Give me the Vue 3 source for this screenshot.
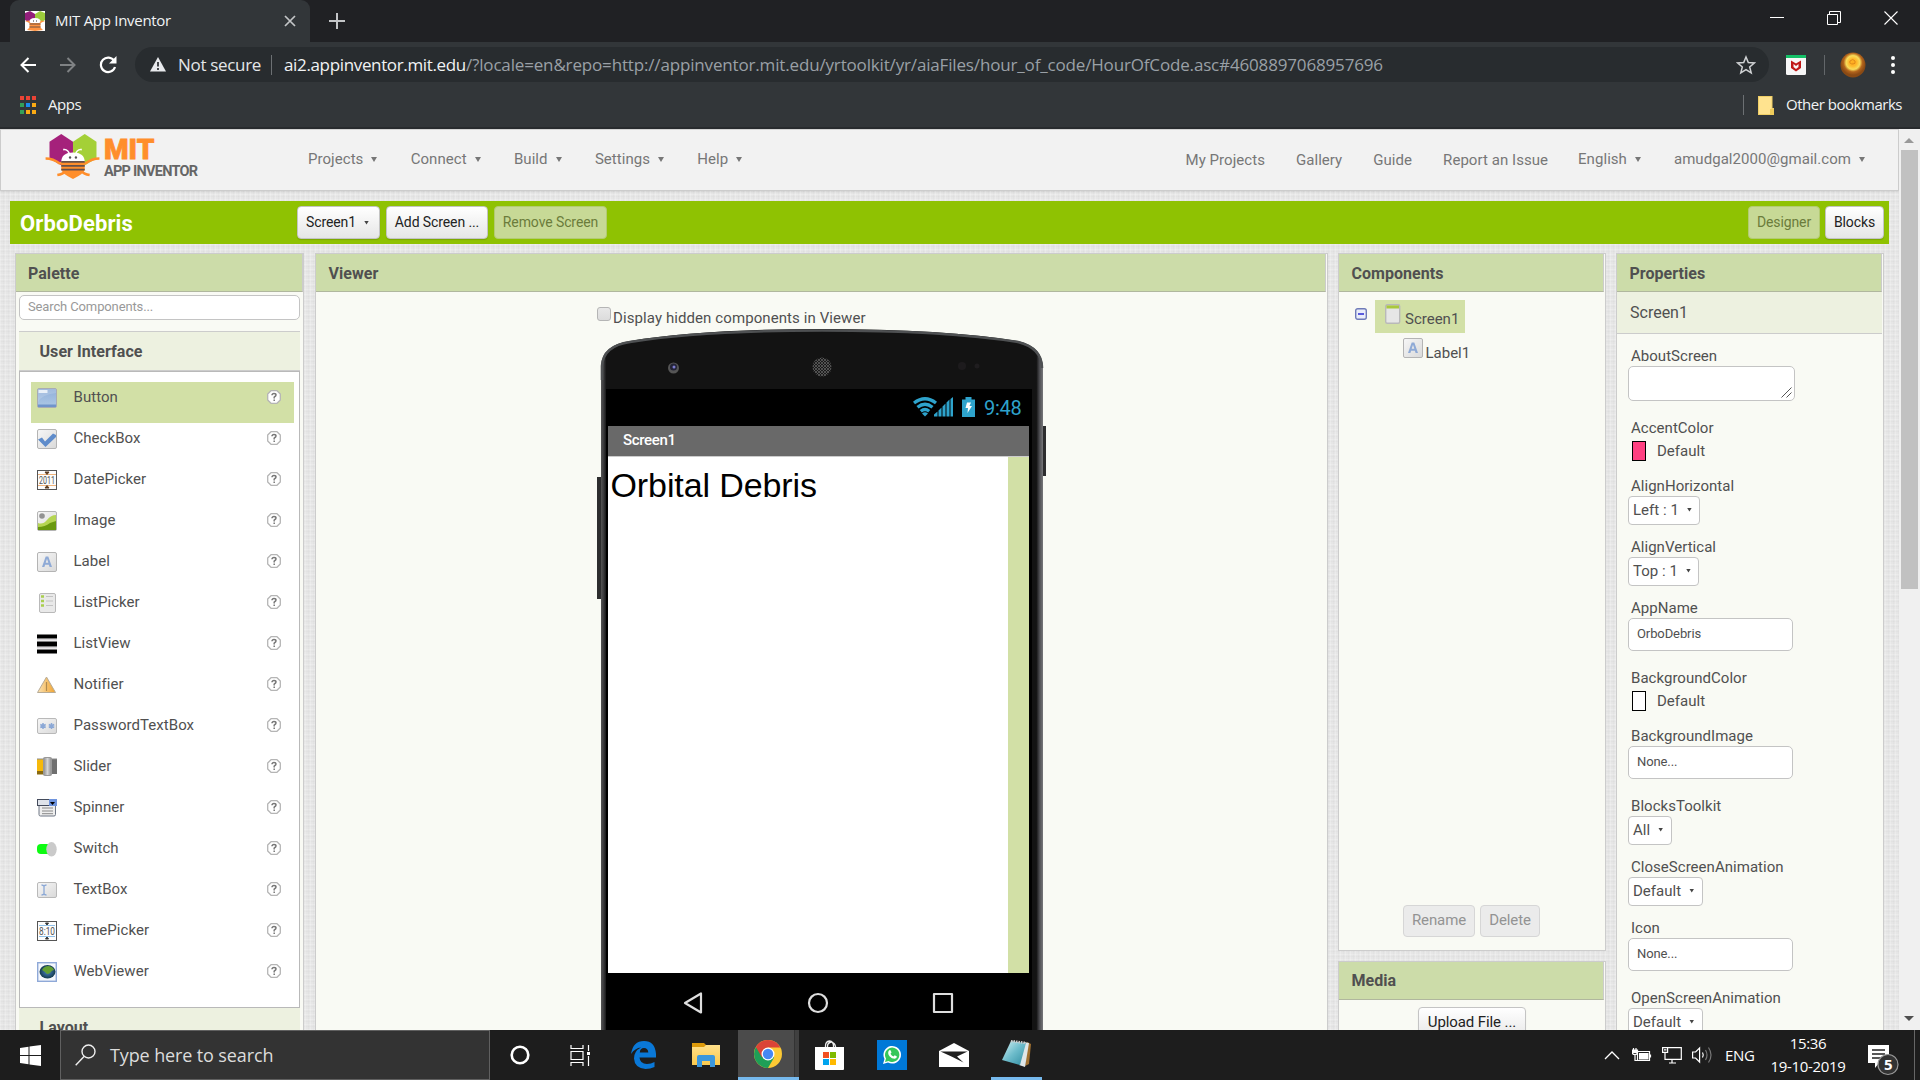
<script setup>
const leftMenu = ['Projects', 'Connect', 'Build', 'Settings', 'Help']
const links = ['My Projects', 'Gallery', 'Guide', 'Report an Issue']
const box = '<rect x=".5" y=".5" width="19" height="19" rx="1.5" fill="url(#gBox)" stroke="#b4b4b4"/>'
const low = '<rect x=".5" y="2.5" width="19" height="15" rx="1.5" fill="url(#gBox)" stroke="#b9b9b9"/>'
const palette = [
  ['Button', '<rect x=".5" y=".5" width="19" height="19" rx="1.5" fill="url(#gBlue)" stroke="#a9acb3"/><path d="M1 16.500h18v2.500H1z" fill="#7094cb"/><path d="M1.500 2h9v3h-9z" fill="#e4edf7"/><path d="M1 14Q4 7 19 5V1H1z" fill="#fff" opacity=".15"/>'],
  ['CheckBox', box + '<path d="M1 10.500l4-2 3 4 8-8 3 1.500v2L8.500 18z" fill="#5f8ccb"/>'],
  ['DatePicker', '<rect x=".5" y=".5" width="19" height="19" fill="#fdfdfd" stroke="#555"/><path d="M1 4.500h18M1 15.500h18" stroke="#f0b47c"/><path d="M8 2h4l-2 2.500zM8 18h4l-2-2.500z" fill="#5b3b20" stroke="#5b3b20"/><text x="10" y="13.700" text-anchor="middle" font-size="10" font-family="Roboto" textLength="16" lengthAdjust="spacingAndGlyphs" fill="#555">2011</text>'],
  ['Image', box + '<circle cx="5" cy="5" r="2.800" fill="#929292"/><path d="M1 12Q6 14 10 9T19 4v8l-18 7z" fill="#b5d553"/><path d="M1 16Q8 16 13 12l6-2v9H1z" fill="#69990f"/>'],
  ['Label', box + '<path d="M5 15L8.700 4.500h2.600L15 15h-2.400l-.7-2.300H8.100L7.400 15zM8.700 10.800h2.600L10 6.700z" fill="#8faad6"/>'],
  ['ListPicker', '<rect x="2.500" y=".5" width="16" height="19" rx="1.500" fill="#e9e9e9" stroke="#b9b9b9"/><path d="M9 3.500h7M9 8h7M9 12.500h7" stroke="#c3c3c3"/><path d="M4 3.500h3M4 8h3M4 12.500h3" stroke="#a9ce4e" stroke-width="2.400"/>'],
  ['ListView', '<path d="M0 .5h20v4H0zM0 7.500h20v5H0zM0 15.500h20v4H0z"/><path d="M0 5h20v1.500H0zM0 13h20v1.500H0z" fill="#d8d5d8"/>'],
  ['Notifier', '<path d="M9.500 2L18.500 17.500H.5z" fill="url(#gOr)" stroke="#b7ab96"/><path d="M9.500 7v9" stroke="#b08a50" stroke-width="1.200"/>'],
  ['PasswordTextBox', low + '<path d="M6 7v6M3.300 8.500l5.400 3M8.700 8.500l-5.400 3M14.500 7v6M11.800 8.500l5.400 3M17.200 8.500l-5.400 3" stroke="#8ba8d6" stroke-width="1.500"/>'],
  ['Slider', '<path d="M0 2h7v15H0z" fill="#f6b90a"/><path d="M0 14h7v3.500H0z" fill="#8a6a10"/><path d="M14 2h6v15h-6z" fill="#6f6f6f"/><path d="M0 2h20" stroke="#8b8b8b"/><rect x="6.500" y=".5" width="8" height="18" rx="1" fill="url(#gKnob)" stroke="#999"/>'],
  ['Spinner', '<rect x="2" y="6" width="16.500" height="12" rx="1.500" fill="#eee" stroke="#6f7785"/><path d="M5 10h11M5 13h11M5 15.700h11" stroke="#888"/><rect x=".5" y="1.500" width="19" height="6" fill="#dfe3ea" stroke="#444b5c"/><path d="M12 1h8v7h-8z" fill="#6f94dd"/><path d="M13 4h5l-2.500 3z" fill="#000"/>'],
  ['Switch', '<rect x="0" y="5" width="17" height="10" rx="4" fill="#0dfb12"/><ellipse cx="14.500" cy="10.300" rx="5.200" ry="7.300" fill="#cacaca"/>'],
  ['TextBox', low + '<path d="M4.500 5q2 0 2.500 1.200Q7.500 5 9.500 5M4.500 15q2 0 2.500-1.200 .5 1.200 2.500 1.200M7 6v8" fill="none" stroke="#8ba8d6" stroke-width="1.300"/>'],
  ['TimePicker', '<rect x=".5" y=".5" width="19" height="19" fill="#fdfdfd" stroke="#555"/><path d="M2 4.500h16M2 15.500h16" stroke="#8fc0e8"/><path d="M8.500 2h3L10 4zM8.500 18h3L10 16z" fill="#333" stroke="#333"/><text x="10" y="13.700" text-anchor="middle" font-size="10" font-family="Roboto" textLength="16" lengthAdjust="spacingAndGlyphs" fill="#555">8:10</text>'],
  ['WebViewer', '<rect x=".7" y=".7" width="18.600" height="18.600" fill="#f4f7fc" stroke="#8fa9d8" stroke-width="1.400"/><ellipse cx="10.500" cy="9.700" rx="8" ry="6.800" fill="url(#gGl)"/><path d="M5 8q2-4 7-4 4 1 5 4-2 0-4 3-3 2-4 0-2-2-4-3z" fill="#63a032"/>'],
]
const props = [
  ['AboutScreen', 'area', ''], ['AccentColor', 'pink', 'Default'], ['AlignHorizontal', 'select', 'Left : 1'], ['AlignVertical', 'select', 'Top : 1'],
  ['AppName', 'input', 'OrboDebris'], ['BackgroundColor', 'white', 'Default'], ['BackgroundImage', 'input', 'None...'], ['BlocksToolkit', 'select', 'All'],
  ['CloseScreenAnimation', 'select', 'Default'], ['Icon', 'input', 'None...'], ['OpenScreenAnimation', 'select', 'Default'],
]
const labelIcon = palette[4][1]
</script>

<template>
  <div class="desktop">
    <svg class="defs" width="0" height="0">
      <defs>
        <linearGradient id="gBox" x2="1" y2="1"><stop stop-color="#f7f7f7" /><stop offset="1" stop-color="#d9d9d9" /></linearGradient>
        <linearGradient id="gBlue" x2="0" y2="1"><stop stop-color="#90afd9" /><stop offset="1" stop-color="#adc8e6" /></linearGradient>
        <linearGradient id="gOr" x2="1"><stop stop-color="#fbe3b4" /><stop offset="1" stop-color="#f0a22e" /></linearGradient>
        <linearGradient id="gKnob" x2="1"><stop stop-color="#8a8a8a" /><stop offset=".5" stop-color="#d5d5d5" /><stop offset="1" stop-color="#8a8a8a" /></linearGradient>
        <radialGradient id="gGl"><stop stop-color="#4d86c8" /><stop offset="1" stop-color="#133a4d" /></radialGradient>
        <radialGradient id="gAv" cy=".4"><stop stop-color="#ffab1e" /><stop offset=".3" stop-color="#ffb82a" /><stop offset=".55" stop-color="#f8dc5a" /><stop offset=".75" stop-color="#b3641c" /><stop offset="1" stop-color="#8a4a14" /></radialGradient>
        <linearGradient id="gFold" x2="0" y2="1"><stop stop-color="#ffe08a" /><stop offset="1" stop-color="#fbc94c" /></linearGradient>
        <linearGradient id="gNote" x2="1" y2="1"><stop stop-color="#d6f2f5" /><stop offset=".5" stop-color="#6dbccb" /><stop offset="1" stop-color="#2f8ca0" /></linearGradient>
        <linearGradient id="gBody" x2="1"><stop stop-color="#555" /><stop offset=".006" stop-color="#3a3a3c" /><stop offset=".012" stop-color="#131313" /><stop offset=".985" stop-color="#131313" /><stop offset=".992" stop-color="#4c4c50" /><stop offset="1" stop-color="#77777a" /></linearGradient>
        <pattern id="mesh" width="3" height="3" patternUnits="userSpaceOnUse"><rect width="3" height="3" fill="#1a1a1a" /><path d="M0 0l3 3M3 0L0 3" stroke="#666" stroke-width=".7" /></pattern>
        <g id="bee">
          <path d="M4 9L16 1l12 8v18L16 33 4 26z" fill="#a5217b" />
          <path d="M28 9L40 1l12 8v17l-12 7-12-7z" fill="#a4d037" />
          <path d="M0 26q8 0 14 5h27q6-5 14-5M12 43q6-1 8-4M45 43q-6-1-8-4" fill="none" stroke="#ff8e2b" stroke-width="2.600" />
          <path d="M18 17q5-1 7 6M37 17q-5-1-7 6" fill="none" stroke="#fff" stroke-width="1.600" />
          <path d="M16 30q0-10 12-10t12 10z" fill="#fff" />
          <path d="M16 29h24v8q0 4-12 10-12-6-12-10z" fill="#ff8e2b" />
          <path d="M16 29.500h24M16 33.500h24M16 37.500h24" stroke="#66504a" stroke-width="1.800" />
          <circle cx="25" cy="25" r="1.200" fill="#555" /><circle cx="31" cy="25" r="1.200" fill="#555" />
        </g>
      </defs>
    </svg>

    <header class="chrome">
      <div class="tabs">
        <div class="tab">
          <svg class="fav" width="20" height="20" viewBox="0 0 20 20"><rect width="20" height="20" fill="#fff" /><path d="M0 2l5-2 5 3v7L5 12 0 9z" fill="#931f7b" /><path d="M10 3l5-3 5 2v7l-5 3-5-2z" fill="#9ccc3c" /><path d="M4 12q0-5 6-5t6 5z" fill="#fff" /><path d="M0 10l4.500 2v4.500L2 19l8 1 8-1-2.500-2.500V12l4.500-2-4-.5-1.500 2.500h-9L4 9.500z" fill="#ff9340" /><path d="M4.500 13h11M4.500 16h11" stroke="#70513f" /><path d="M8 10h1M11 10h1" stroke="#333" /></svg>
          <span class="tab-title">MIT App Inventor</span>
          <svg class="tab-x" width="12" height="12" viewBox="0 0 12 12"><path d="M1 1l10 10M11 1L1 11" stroke="#c3c5c7" stroke-width="1.700" /></svg>
        </div>
        <svg class="plus" width="16" height="16" viewBox="0 0 16 16"><path d="M8 0v16M0 8h16" stroke="#c3c5c7" stroke-width="2" /></svg>
        <div class="win">
          <svg width="14" height="14" viewBox="0 0 14 14"><path d="M0 6.500h14" stroke="#fff" /></svg>
          <svg width="14" height="14" viewBox="0 0 14 14"><path d="M.5 3.500h10v10H.5zM2.500 3.500v-3h11v11h-3" fill="none" stroke="#fff" /></svg>
          <svg width="14" height="14" viewBox="0 0 14 14"><path d="M.5.5l13 13M13.500.5l-13 13" stroke="#fff" stroke-width="1.100" /></svg>
        </div>
      </div>
      <div class="tools">
        <svg class="nav" width="16" height="16" viewBox="0 0 16 16"><path d="M16 8H2M8.500 1L1.500 8l7 7" fill="none" stroke="#fff" stroke-width="2" /></svg>
        <svg class="nav" width="16" height="16" viewBox="0 0 16 16"><path d="M0 8h14M7.500 1l7 7-7 7" fill="none" stroke="#7f8284" stroke-width="2" /></svg>
        <svg class="nav reload" width="18" height="18" viewBox="0 0 18 18"><path d="M15.200 5A7.200 7.200 0 1 0 16 11" fill="none" stroke="#fff" stroke-width="2.200" /><path d="M17.500 0v7.500H10z" fill="#fff" /></svg>
        <div class="omni">
          <svg width="16" height="15" viewBox="0 0 16 15"><path d="M8 0l8 14.500H0z" fill="#e8eaed" /><path d="M8 5v4.500M8 11v2" stroke="#282c2f" stroke-width="1.700" /></svg>
          <span class="notsec">Not secure</span><i class="bar"></i>
          <span class="host">ai2.appinventor.mit.edu</span><span class="path">/?locale=en&amp;repo=http://appinventor.mit.edu/yrtoolkit/yr/aiaFiles/hour_of_code/HourOfCode.asc#4608897068957696</span>
          <svg class="star" width="20" height="20" viewBox="0 0 20 20"><path d="M10 2l2.300 5.600 6 .4-4.600 3.900 1.500 5.900L10 14.600l-5.200 3.200 1.500-5.900L1.700 8l6-.4z" fill="none" stroke="#d0d2d4" stroke-width="1.500" /></svg>
        </div>
        <svg class="mcafee" width="20" height="20" viewBox="0 0 20 20"><rect width="20" height="20" rx="1.500" fill="#f7f7f7" /><path d="M0 0h20v3H0z" fill="#14c067" /><path d="M5 5.500l5 3 5-3V13l-5 3.500L5 13zM7.500 9v3l2.500 2 2.500-2V9L10 11z" fill="#c01818" fill-rule="evenodd" /></svg>
        <i class="tsep"></i>
        <svg class="avatar" width="26" height="26" viewBox="0 0 26 26"><circle cx="13" cy="13" r="12.500" fill="url(#gAv)" /><path d="M10 9q3-3 5 0 1 3-2 3-4 0-3-3z" fill="none" stroke="#e08a1a" /></svg>
        <svg class="dots" width="4" height="18" viewBox="0 0 4 18"><circle cx="2" cy="2" r="2" fill="#fff" /><circle cx="2" cy="9" r="2" fill="#fff" /><circle cx="2" cy="16" r="2" fill="#fff" /></svg>
      </div>
      <div class="marks">
        <svg width="16" height="18" viewBox="0 0 16 18"><path d="M0 0h4v4H0zM6 0h4v4H6zM12 0h4v4h-4z" fill="#ea4335" /><path d="M0 7h4v4H0zM0 14h4v4H0z" fill="#34a058" /><path d="M6 7h4v4H6z" fill="#1a8cf0" /><path d="M12 7h4v4h-4zM12 14h4v4h-4zM6 14h4v4H6z" fill="#fbab14" /></svg>
        <span class="apps">Apps</span>
        <i class="msep"></i>
        <svg class="mfold" width="16" height="19" viewBox="0 0 16 19"><path d="M0 0h14.500v12H16v7H0z" fill="#f0cf66" /><path d="M1 1h12.500v17H1z" fill="#ffe38f" /><path d="M12 13h4v6h-4z" fill="#eecb5b" /></svg>
        <span class="other">Other bookmarks</span>
      </div>
    </header>

    <div class="window">
      <main class="page">
        <div class="topbar">
          <svg class="logo" width="55" height="46" viewBox="0 0 55 47"><use href="#bee" /></svg>
          <div class="brand"><b>MIT</b><span>APP INVENTOR</span></div>
          <nav class="menu"><a v-for="m in leftMenu" :key="m">{{ m }}<i class="caret"></i></a></nav>
          <nav class="links">
            <a v-for="m in links" :key="m" class="low">{{ m }}</a>
            <a class="lang">English<i class="caret"></i></a>
            <a class="mail">amudgal2000@gmail.com<i class="caret"></i></a>
          </nav>
        </div>

        <div class="greenbar">
          <h1>OrboDebris</h1>
          <div class="btn b1">Screen1<i class="caret dark"></i></div>
          <div class="btn b2">Add Screen ...</div>
          <div class="btn off b3">Remove Screen</div>
          <div class="btn off push">Designer</div>
          <div class="btn last">Blocks</div>
        </div>

        <div class="columns">
          <section class="panel palette">
            <h2>Palette</h2>
            <div class="search">Search Components...</div>
            <h3>User Interface</h3>
            <ul class="list">
              <li v-for="([n, ic], i) in palette" :key="n" :class="{ on: i === 0 }">
                <svg width="20" height="20" viewBox="0 0 20 20" v-html="ic"></svg>
                <span>{{ n }}</span>
                <svg class="help" width="14" height="14" viewBox="0 0 14 14"><path d="M4 .7h6L13.300 4v6L10 13.300H4L.7 10V4z" fill="#fff" stroke="#b5b5b5" stroke-width="1.300" stroke-linejoin="round" /><path d="M5 5.300q0-1.700 2-1.700t2 1.500q0 1-1.800 2v1.300M7.200 9.500v1.500" fill="none" stroke="#777" stroke-width="1.500" /></svg>
              </li>
            </ul>
            <h3 class="second">Layout</h3>
          </section>

          <section class="panel viewer">
            <h2>Viewer</h2>
            <div class="hidden-row"><i class="check"></i><span>Display hidden components in Viewer</span></div>
            <div class="phone">
              <svg class="shell" width="450" height="712" viewBox="597 328 450 712">
                <path d="M597 477h5v122h-5zM1042 426h4v50h-4z" fill="#2d2d2e" />
                <path d="M601 1040V366Q602 345 630 341Q700 329 822 329Q945 329 1018 341Q1043 347 1043 368V1040z" fill="url(#gBody)" />
                <path d="M602 380V366Q603 346 630 342Q700 330.500 822 330.500Q945 330.500 1018 342Q1042 348 1042 368" fill="none" stroke="#4e5052" stroke-width="2.600" />
                <path d="M606 389h426v650H606z" fill="#000" />
                <circle cx="673.500" cy="368" r="5.500" fill="#555" /><circle cx="673.500" cy="367" r="3.500" fill="#232336" /><circle cx="674" cy="367" r="1.500" fill="#7d7dd0" />
                <circle cx="822" cy="367" r="9.500" fill="url(#mesh)" />
                <circle cx="962" cy="366" r="4" fill="#1d1b1d" /><circle cx="977" cy="366" r="2.500" fill="#1f1d1f" />
                <g fill="none" stroke="#dedede" stroke-width="2.200" stroke-linejoin="round"><path d="M685 1003l16-9.500v19z" /><circle cx="818" cy="1003" r="9" /><rect x="934" y="994" width="18" height="18" /></g>
              </svg>
              <div class="status">
                <svg width="42" height="20" viewBox="0 0 42 20"><g fill="none" stroke="#2ea3cc" stroke-width="3.300"><path d="M1 6Q12-2.500 23 6M4.500 10.300q7.500-6 15 0M7.800 14.300q4.200-3.500 8.400 0" /></g><path d="M9 16.500q3-2.500 6 0L12 19.500z" fill="#2ea3cc" /><path d="M21 19.500v-2l3.500-3v5zM25.500 19.500v-6l3-3v9zM29.500 19.500V9.500l3-3v13zM33.500 19.500V5.500l3-3v17zM37.500 19.500V2L40 0v19.500z" fill="#2ea3cc" /></svg>
                <svg class="batt" width="13" height="20" viewBox="0 0 13 20"><path d="M0 2.500h3.500V0h6v2.500H13V20H0z" fill="#2ea3cc" /><path d="M5 5.500h4L7.500 9H10l-4.500 7L6 11H3.500z" fill="#fff" /></svg>
                <span>9:48</span>
              </div>
              <div class="formtitle">Screen1</div>
              <div class="form"><span>Orbital Debris</span></div>
            </div>
          </section>

          <div class="stack">
            <section class="panel comps">
              <h2>Components</h2>
              <div class="tree">
                <svg class="minus" width="12" height="12" viewBox="0 0 12 12"><rect x=".7" y=".7" width="10.600" height="10.600" rx="2" fill="#e9edf9" stroke="#6f7bb8" stroke-width="1.400" /><path d="M3 6h6" stroke="#1c1cd0" stroke-width="1.400" /></svg>
                <div class="node sel"><svg width="20" height="20" viewBox="0 0 20 20"><rect x="2.700" y=".7" width="14" height="18.600" rx="1.500" fill="#e6e6e6" stroke="#b9b9b9" stroke-width="1.400" /><path d="M3.400 1.400h12.600V4.500H3.400z" fill="#a9c83d" /></svg>Screen1</div>
              </div>
              <div class="node child"><svg width="20" height="20" viewBox="0 0 20 20" v-html="labelIcon"></svg>Label1</div>
              <div class="acts"><div class="btn grey r1">Rename</div><div class="btn grey r2">Delete</div></div>
            </section>
            <section class="panel media">
              <h2>Media</h2>
              <div class="btn upload">Upload File ...</div>
            </section>
          </div>

          <section class="panel properties">
            <h2>Properties</h2>
            <div class="sub">Screen1</div>
            <div v-for="[n, k, v] in props" :key="n" class="prop">
              <label>{{ n }}</label>
              <div v-if="k === 'area'" class="area"><svg width="11" height="11" viewBox="0 0 11 11"><path d="M.5 10.500l10-10M5.500 10.500l5-5" stroke="#555" /></svg></div>
              <div v-else-if="k === 'select'" class="select">{{ v }}<i class="caret dark"></i></div>
              <div v-else-if="k === 'input'" class="input">{{ v }}</div>
              <div v-else class="swatch"><i :class="k"></i>{{ v }}</div>
            </div>
          </section>
        </div>
      </main>
      <aside class="scroll"><i class="up"></i><i class="thumb"></i><i class="down"></i></aside>
    </div>

    <footer class="taskbar">
      <div class="start"><svg width="21" height="21" viewBox="0 0 21 21"><path d="M0 3l8.500-1.300V10H0zM9.500 1.500L21 0v10H9.500zM0 11h8.500v8.300L0 18zM9.500 11H21v10L9.500 19.500z" fill="#fff" /></svg></div>
      <div class="find"><svg width="21" height="22" viewBox="0 0 21 22"><circle cx="13.500" cy="7.500" r="6.500" fill="none" stroke="#eee" stroke-width="1.400" /><path d="M9 12.500L.7 21.300" stroke="#eee" stroke-width="1.400" /></svg><span>Type here to search</span></div>
      <div class="apps-row">
        <div class="app w60"><svg width="20" height="20" viewBox="0 0 20 20"><circle cx="10" cy="10" r="8.300" fill="none" stroke="#fff" stroke-width="2.600" /></svg></div>
        <div class="app w60"><svg width="21" height="21" viewBox="0 0 21 21"><path d="M1 0v3.500h12V0M1 21v-3.500h12V21M1 6.500h12v8H1zM18.500 0v6M18.500 11v10" fill="none" stroke="#fff" stroke-width="1.200" /><path d="M17 7h3v3h-3z" fill="#fff" /></svg></div>
        <div class="app edge"><svg width="25" height="28" viewBox="0 0 25 28"><path d="M0 13Q2 0 13 0q11 0 12 13v3.500H8.500Q9 23 16 23q4 0 7.500-2v5q-4 2-9 2Q3.500 27 3 17.500 3 10 10 6.500 4 7 0 13zM8.800 11.500h8.500Q17 7 13 7t-4.200 4.500z" fill="#0a78d7" fill-rule="evenodd" /></svg></div>
        <div class="app folder"><svg width="28" height="24" viewBox="0 0 28 24"><path d="M0 0h12l2 2v3H0z" fill="#dd9a0a" /><path d="M0 4h12l2-2h14v20H0z" fill="url(#gFold)" /><path d="M5 24V14q0-2 2-2h14q2 0 2 2v10h-5v-6h-8v6z" fill="#3b97dc" /></svg></div>
        <div class="app chr"><svg width="28" height="28" viewBox="0 0 28 28"><circle cx="14" cy="14" r="14" fill="#fcc934" /><path d="M14 14L1.900 7A14 14 0 0 0 14 28l6.100-10.500z" fill="#1e9f57" /><path d="M14 7.500h12.400A14 14 0 0 0 1.900 7L8 17.500z" fill="#db4437" /><circle cx="14" cy="14" r="6.500" fill="#fff" /><circle cx="14" cy="14" r="5.200" fill="#4688f4" /></svg></div>
        <div class="app store"><svg width="29" height="30" viewBox="0 0 29 30"><path d="M10.500 8V6q0-4.500 4-5 4 .5 4 5v2M12.500 8V6.500q0-4 4-4.500 3.500 1 4 4.500V8" fill="none" stroke="#eee" stroke-width="1.300" /><path d="M0 7h29v22q0 1-1 1H1q-1 0-1-1z" fill="#fff" /><path d="M8 12h6v6H8z" fill="#f25022" /><path d="M15 12h6v6h-6z" fill="#7fba00" /><path d="M8 19h6v6H8z" fill="#00a4ef" /><path d="M15 19h6v6h-6z" fill="#ffb900" /></svg></div>
        <div class="app"><svg width="30" height="30" viewBox="0 0 30 30"><path d="M0 0h30v30H0z" fill="#0078d7" /><path d="M6 24l1.500-5A8.800 8.800 0 1 1 11 22.500z" fill="#fff" /><path d="M8 22l1-3.500A7.200 7.200 0 1 1 11.500 21z" fill="#35c759" /><path d="M12 10.500q1-1 1.700 0l.8 2-1 1.200q1 2 3 2.800l1.200-1.200 2.200 1.200q0 2-2.200 2.300-3 0-5.200-2.600-2.400-3-.5-5.700z" fill="#fff" /></svg></div>
        <div class="app"><svg width="30" height="25" viewBox="0 0 30 25"><path d="M0 8L15 0l15 8v16H0z" fill="#fff" /><path d="M1.500 8.500h27L18 13.500l6.500 6L13 13.800z" fill="#1e1e1e" /></svg></div>
        <div class="app note"><svg width="30" height="28" viewBox="0 0 30 28"><path d="M25 2l4 2-2 20-4 2z" fill="#a07030" /><path d="M22 2l5 1-4 24-6-2z" fill="#dfe6e8" /><path d="M9 1l15 2-6 22-18-5z" fill="url(#gNote)" /><path d="M9 1l15 2" stroke="#ccc" stroke-width="2.500" stroke-dasharray="1.500 1" /></svg></div>
      </div>
      <div class="tray">
        <svg width="16" height="10" viewBox="0 0 16 10"><path d="M1 9l7-7 7 7" fill="none" stroke="#fff" stroke-width="1.300" /></svg>
        <svg class="t1" width="20" height="14" viewBox="0 0 20 14"><path d="M5.500 3.500h12v9h-12zM18.500 6.500v3" fill="none" stroke="#fff" stroke-width="1.200" /><path d="M7 5h9.500v6.500H7z" fill="#fff" /><path d="M0 2h5.500v2.500q0 2-2.500 2t-3-2zM1.500 0v2M4 0v2M3 6v6.500h3" fill="none" stroke="#fff" stroke-width="1.200" /><path d="M0 2h5.500v3H0z" fill="#fff" /></svg>
        <svg class="t2" width="20" height="17" viewBox="0 0 20 17"><path d="M6 .7h13.300v11.600H3V6M10 12.500V16M7 16h7M.6.6h5v4.800h-5zM2 2.800h2.500" fill="none" stroke="#fff" stroke-width="1.200" /></svg>
        <svg class="t3" width="21" height="18" viewBox="0 0 21 18"><path d="M.6 6h3l4-4v14l-4-4h-3z" fill="none" stroke="#fff" stroke-width="1.200" /><path d="M10.500 6.500q1.500 2.500 0 5" fill="none" stroke="#fff" stroke-width="1.200" /><path d="M13.500 4q3 5 0 10M16.500 1.500q5 7.500 0 15" fill="none" stroke="#777" stroke-width="1.200" /></svg>
        <span class="eng">ENG</span>
        <div class="clock"><span>15:36</span><span>19-10-2019</span></div>
        <div class="notif"><svg width="32" height="32" viewBox="0 0 32 32"><path d="M0 0h21v18H11l-4 5v-5H0z" fill="#fff" /><path d="M4 5h13M4 9h13M4 13h13" stroke="#222" stroke-width="1.300" /><circle cx="20" cy="19.500" r="10" fill="#333" stroke="#999" stroke-width="1.200" /></svg><b>5</b></div>
      </div>
      <i class="peek"></i>
    </footer>
  </div>
</template>

<style>
body { margin: 0; background: #1d1d1d; overflow: hidden; }
</style>

<style scoped>
* { box-sizing: border-box; }
h1, h2, h3, ul { margin: 0; padding: 0; list-style: none; }
svg { display: block; flex: none; }
i { display: block; flex: none; font-style: normal; }
.desktop { width: 1920px; height: 1080px; display: flex; flex-direction: column; overflow: hidden; font-family: Roboto, sans-serif; font-size: 15px; color: #505050; white-space: nowrap; }
.defs { position: absolute; }

.chrome { height: 129px; flex: none; background: #323639; border-bottom: 2px solid #282b2e; font-family: "Open Sans", sans-serif; color: #f1f3f4; }
.tabs { height: 42px; background: #202124; display: flex; align-items: center; padding-left: 10px; }
.tab { width: 300px; height: 42px; background: #323639; border-radius: 9px 9px 0 0; display: flex; align-items: center; padding: 0 14px 0 15px; }
.tab-title { margin-left: 10px; padding-bottom: 2px; font-size: 15px; letter-spacing: -.29px; }
.tab-x { margin-left: auto; }
.plus { margin-left: 19px; }
.win { margin-left: auto; display: flex; gap: 43px; padding: 0 22px 6px 0; }
.tools { height: 45px; display: flex; align-items: center; padding-left: 20px; }
.nav { margin-right: 24px; }
.reload { margin-left: -1px; margin-right: 18px; }
.omni { width: 1634px; height: 35px; border-radius: 18px; background: #282c2f; display: flex; align-items: center; padding: 0 13px 0 15px; font-size: 17px; }
.notsec { margin-left: 12px; width: 83px; color: #e4e6e8; letter-spacing: -.32px; }
.bar { width: 1px; height: 20px; background: #6c7073; margin: 0 12px 0 10px; }
.host { letter-spacing: -.35px; }
.path { color: #9aa0a6; letter-spacing: -.16px; }
.star { margin-left: auto; }
.mcafee { margin-left: 17px; }
.tsep { width: 1px; height: 20px; background: #63676a; margin: 0 15px 0 18px; }
.dots { margin-left: 25px; }
.marks { height: 36px; display: flex; align-items: center; padding: 0 18px 0 20px; letter-spacing: -.48px; }
.marks span { padding-bottom: 2px; }
.apps { margin-left: 12px; }
.msep { width: 1px; height: 20px; margin-left: auto; background: #6c7073; }
.mfold { margin: 0 12px 0 14px; }

.window { flex: none; height: 901px; display: flex; overflow: hidden; }
.page { width: 1899px; display: flex; flex-direction: column; background-color: #e6e6e6; background-image: repeating-linear-gradient(90deg, rgba(255,255,255,.2) 0 1px, transparent 1px 3px, rgba(0,0,0,.015) 3px 4px, transparent 4px 5px), repeating-linear-gradient(0deg, rgba(255,255,255,.2) 0 1px, transparent 1px 3px, rgba(0,0,0,.015) 3px 4px, transparent 4px 5px); }
.topbar { height: 62px; flex: none; border: 1px solid #ccc; border-top-color: #d4d4d4; background: #f2f2f2; display: flex; align-items: center; padding-left: 44px; box-shadow: 0 1px 2px rgba(0,0,0,.08); color: #777; letter-spacing: .05px; }
.logo { margin-top: -8px; }
.brand { margin-left: 4px; width: 204px; display: flex; flex-direction: column; font-weight: bold; color: #666; padding-bottom: 4px; }
.brand b { font-size: 28px; line-height: 27px; color: #ff8e2b; -webkit-text-stroke: .8px #ff8e2b; }
.brand span { font-size: 14.5px; line-height: 17px; letter-spacing: -.75px; }
.menu { display: flex; gap: 33.3px; padding-bottom: 2px; }
.menu a, .links a { display: flex; align-items: center; }
.caret { width: 0; height: 0; border: 3px solid transparent; border-top: 5px solid #777; border-bottom: 0; margin-left: 8px; }
.caret.dark { width: 5px; height: 4px; border: 0; background: #444; clip-path: polygon(0 0, 100% 0, 50% 100%); margin-left: 8px; }
.links { margin-left: auto; display: flex; gap: 31px; padding: 0 33px 2px 0; }
.links .low { padding-top: 2px; }
.links .lang { margin-left: -1px; }
.links .mail { margin-left: 2px; }
.greenbar { flex: none; height: 43px; width: 1879px; margin: 10px 0 0 10px; background: #8fc202; display: flex; align-items: flex-start; padding: 5px 5px 0 10px; gap: 6px; }
h1 { width: 271px; font-size: 22px; line-height: 36px; color: #fff; letter-spacing: .12px; }
.btn { height: 33px; border: 1px solid #c4c4c4; border-radius: 4px; background: linear-gradient(#fff, #e6e6e6); color: #222; font-size: 14px; line-height: 31px; display: flex; align-items: center; justify-content: center; box-shadow: 0 1px 1px rgba(0,0,0,.15); letter-spacing: -.1px; }
.btn.off { background: #c7d996; border-color: #b3cb72; color: #6b7c3b; box-shadow: none; }
.btn.grey { background: #ebebeb; border-color: #d6d6d6; color: #939393; height: 32px; box-shadow: none; font-size: 15px; padding-bottom: 2px; }
.b1 { width: 83px; padding-right: 2px; }
.b2 { width: 102px; }
.b3 { width: 113px; }
.push { margin-left: auto; width: 72px; }
.last { width: 59px; margin-left: -1px; }
.r1 { width: 72px; }
.r2 { width: 60px; }

.columns { display: flex; align-items: flex-start; margin-top: 9px; padding-left: 15px; }
.panel { background: #f9faf4; border: 1px solid #ccc; position: relative; }
h2 { height: 38px; margin-right: 1px; font-size: 16px; line-height: 39px; padding-left: 12.5px; background: #ccdca9; border-bottom: 1px solid #b0b79e; border-right: 1px solid #ccc; letter-spacing: .04px; }
.palette, .viewer, .properties { height: 900px; }
.palette { width: 289px; }
.palette h2 { margin-right: 0; padding-left: 12px; }
.search { margin: 3px 3px 0; width: 281px; height: 25px; border: 1px solid #c4c4c4; border-radius: 5px; background: #fff; font-size: 13px; line-height: 22px; padding-left: 8px; color: #999; letter-spacing: -.13px; }
h3 { width: 281px; height: 40px; margin: 11px 3px 0; background: #edf1e0; border-top: 1px solid #ccc; border-bottom: 1px solid #ccc; font-size: 16px; line-height: 40px; padding-left: 20.5px; letter-spacing: .06px; }
h3.second { margin-top: 0; border-top: 0; }
.list { width: 281px; height: 637px; margin-left: 3px; border: 1px solid #b9b9b9; background: #fff; padding: 10px 5px 0 11px; }
li { height: 41px; display: flex; padding: 6px 13px 0 6px; }
li.on { background: #d2e0a6; }
li span { margin-left: 16.5px; line-height: 18px; letter-spacing: .04px; }
.help { margin: 2px 0 0 auto; }
.viewer { width: 1013px; margin-left: 11px; }
.hidden-row { display: flex; padding: 15px 0 0 281px; height: 36px; }
.check { width: 14px; height: 14px; border: 1px solid #b5b5b5; border-radius: 3px; background: linear-gradient(#e8e8e8, #dcdcdc); }
.hidden-row span { margin-left: 2px; line-height: 23px; letter-spacing: .09px; }
.phone { position: relative; width: 450px; margin-left: 281px; height: 712px; }
.shell { position: absolute; left: 0; top: 0; }
.status { position: relative; display: flex; height: 98px; padding: 69px 0 0 316px; font-size: 20px; line-height: 22px; color: #2ea3cc; letter-spacing: -.3px; }
.batt { margin: 0 9px 0 7px; }
.formtitle { position: relative; width: 421px; height: 31px; margin-left: 11px; background: #696969; border-bottom: 1px solid #ccc; color: #fff; font-weight: 500; line-height: 28px; padding-left: 15px; letter-spacing: -.35px; }
.form { position: relative; width: 421px; height: 516px; margin-left: 11px; background: linear-gradient(90deg, #fff 400px, #d2e0a6 400px); font: 34px/56px "Liberation Sans", sans-serif; letter-spacing: -.1px; color: #000; padding-left: 2.5px; }
.stack { margin-left: 10px; width: 268px; display: flex; flex-direction: column; gap: 10px; }
.comps { height: 698px; display: flex; flex-direction: column; }
.tree { display: flex; margin: 8px 0 0 16px; }
.minus { margin: 8px 8px 0 0; }
.node { height: 33px; display: flex; line-height: 40px; }
.sel { width: 90px; background: #d2e0a6; padding: 4px 0 0 8px; line-height: 31px; }
.sel svg { margin-right: 2px; }
.child { margin-left: 64px; }
.child svg { margin: 5px 2.5px 0 0; }
.acts { display: flex; gap: 5px; margin: auto 0 13px 64px; }
.media { height: 200px; }
.media h2 { line-height: 37px; }
.upload { width: 108px; margin: 7px 0 0 79px; font-size: 15px; padding-bottom: 2px; }
.properties { width: 268px; margin-left: 10px; }
.sub { height: 42px; margin-right: 1px; background: #edf1e0; border-bottom: 1px solid #ccc; font-size: 16px; line-height: 42px; padding-left: 13px; margin-bottom: 12px; }
.prop { padding-left: 11px; letter-spacing: .03px; }
.prop label { display: block; height: 20px; line-height: 20px; padding-left: 3px; }
.area { width: 167px; height: 35px; border: 1px solid #c4c4c4; border-radius: 5px; background: #fff; margin-bottom: 17px; display: flex; align-items: flex-end; justify-content: flex-end; padding: 0 2px 2px 0; }
.select { width: fit-content; height: 29px; border: 1px solid #c4c4c4; border-radius: 4px; background: #fff; margin-bottom: 12px; display: flex; align-items: center; padding: 0 7.5px 2px 4px; }
.input { width: 165px; height: 33px; border: 1px solid #c4c4c4; border-radius: 5px; background: #fff; margin-bottom: 17px; font-size: 13px; line-height: 29px; padding-left: 8px; letter-spacing: -.1px; }
.swatch { display: flex; align-items: center; height: 20px; margin: 3px 0 15px 4px; }
.swatch i { width: 14px; height: 20px; border: 1px solid #000; margin-right: 11px; }
.pink { background: #ff4081; }
.white { background: #fff; }

.scroll { width: 21px; background: #f0f0f0; display: flex; flex-direction: column; padding-top: 9px; }
.up { width: 0; border: 5px solid transparent; border-top: 0; border-bottom-color: #999; margin-left: 5px; }
.thumb { margin: 7px 0 0 2px; width: 17px; height: 439px; background: #c1c1c1; }
.down { width: 0; border: 5px solid transparent; border-bottom: 0; border-top-color: #505050; margin: auto 0 9px 5px; }

.taskbar { height: 50px; flex: none; background: #1d1d1d; display: flex; font-family: "Open Sans", sans-serif; color: #fff; }
.start { width: 60px; padding: 15px 0 0 20px; }
.find { width: 430px; border: 1px solid #606060; background: #333; display: flex; align-items: center; padding-left: 14px; font-size: 18px; color: #dcdcdc; letter-spacing: -.12px; }
.find span { margin-left: 14px; }
.apps-row { display: flex; }
.app { display: flex; align-items: center; justify-content: center; width: 62px; }
.app.w60 { width: 60px; }
.app.edge { width: 66px; }
.app.folder { padding-right: 2px; }
.app.chr { width: 61px; padding-right: 1px; background: linear-gradient(90deg, #4b4b4b 56px, #333 56px 57px, #404040 57px); border-bottom: 3px solid #76b9ed; }
.app.store { padding-right: 2px; }
.app.note { width: 51px; margin-left: 6px; border-bottom: 3px solid #76b9ed; }
.tray { margin-left: auto; display: flex; align-items: center; font-size: 15px; letter-spacing: -.33px; }
.t1 { margin-left: 12px; } .t2 { margin-left: 10px; } .t3 { margin-left: 10px; }
.eng { margin-left: 12px; width: 30px; }
.clock { margin-left: 15px; width: 76px; text-align: center; display: flex; flex-direction: column; line-height: 23px; }
.notif { margin-left: 22px; position: relative; width: 46px; height: 32px; margin-top: 12px; }
.notif b { position: absolute; left: 16px; top: 8px; font-size: 15px; line-height: 22px; }
.peek { width: 6px; border-left: 1px solid #666; }
</style>
